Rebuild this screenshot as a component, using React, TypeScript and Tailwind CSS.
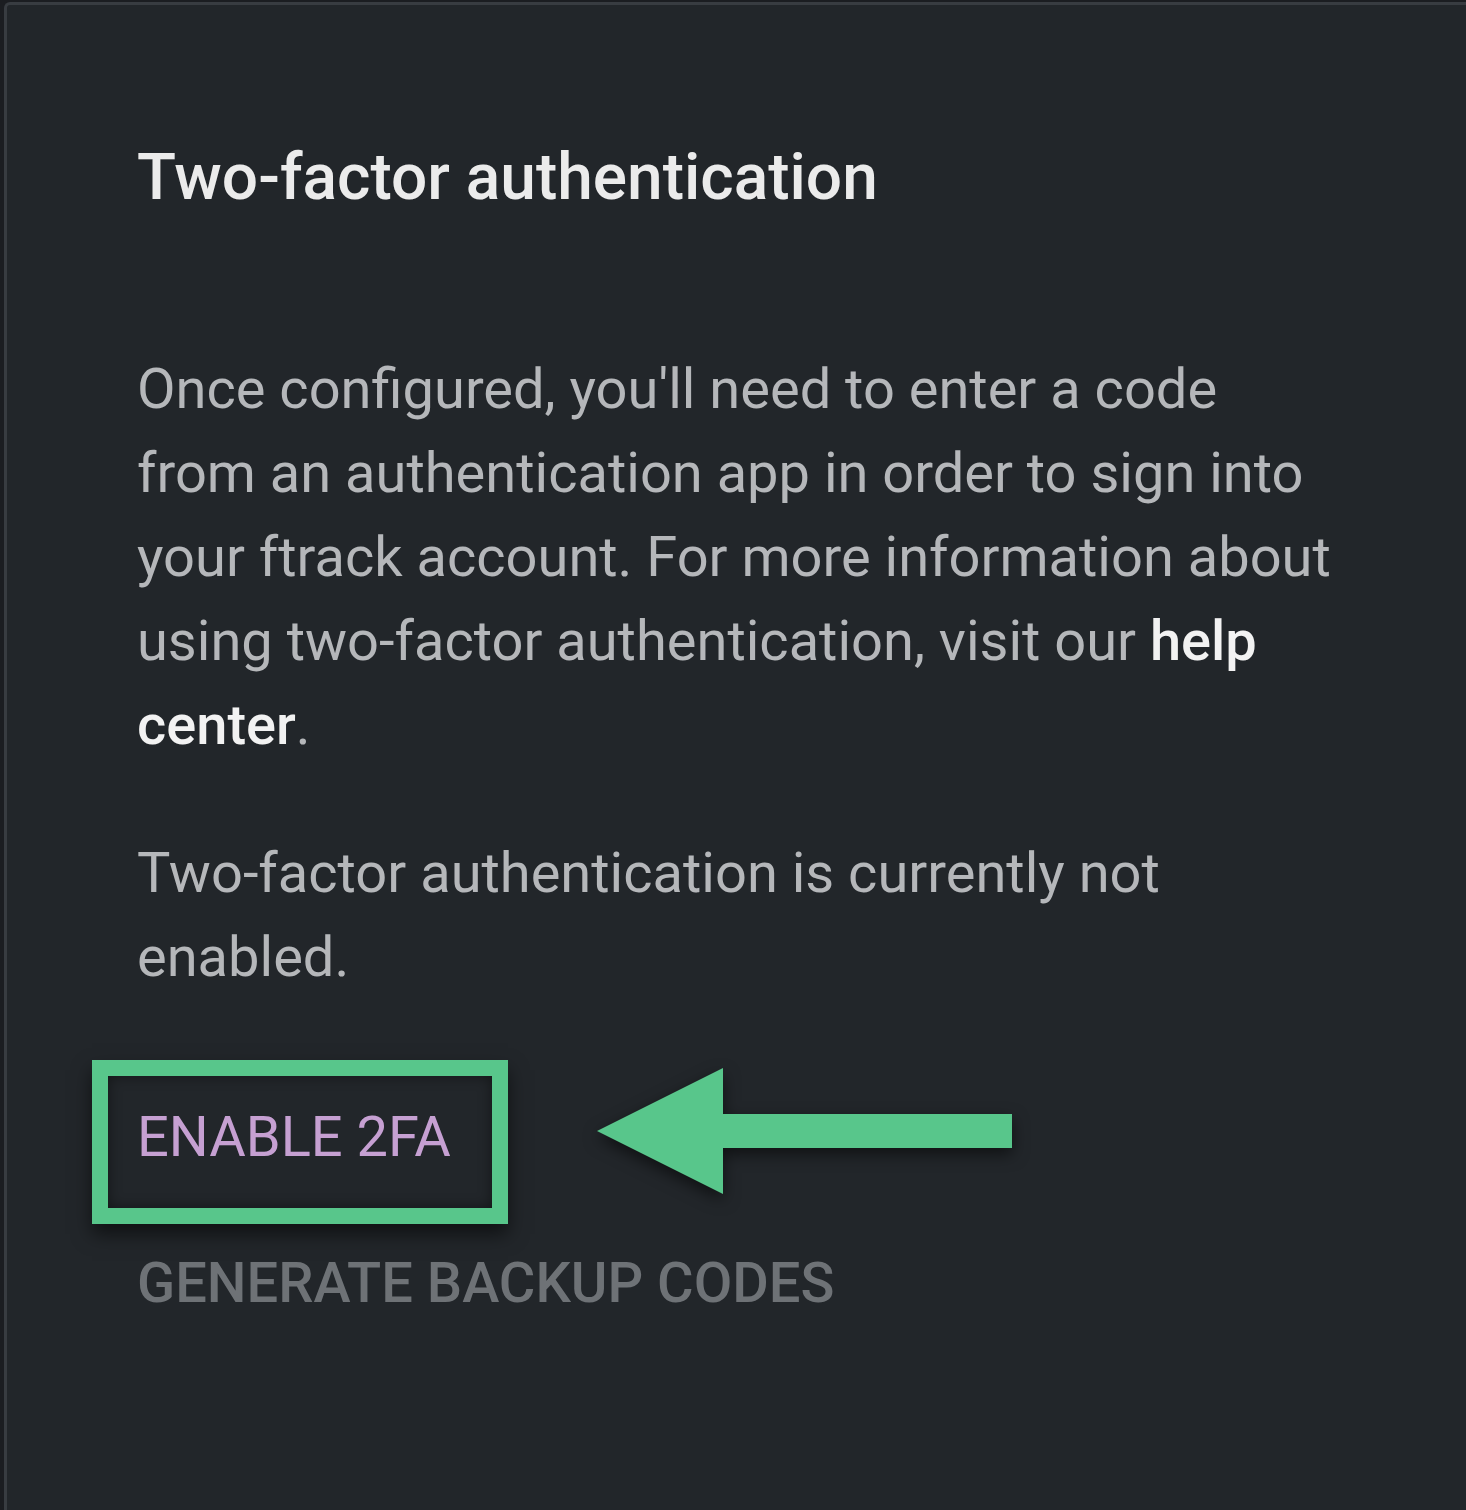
const FONT = { fontFamily: 'Roboto, "Noto Sans", sans-serif' }

const Arrow: React.FC = () => (
  <svg
    width="440"
    height="150"
    viewBox="0 0 440 150"
    className="absolute left-[460px] top-[-27px] drop-shadow-[0_6px_8px_rgba(0,0,0,0.55)]"
  >
    <path d="M 0 63 L 126 0 L 126 46 L 415 46 L 415 80 L 126 80 L 126 126 Z" fill="#58c68b" />
  </svg>
)

export default function App() {
  return (
    <div className="min-h-[1510px] bg-[#1b1d21] pt-[2px] pl-[4px]" style={FONT}>
      <div className="min-h-[1508px] bg-[#22262a] border-t-[3px] border-l-[3px] border-[#383c41] rounded-tl-[6px] pl-[130px] pt-[128px]">
        <h1 className="text-[64px] leading-[90px] font-medium text-[#ebebeb]">
          Two-factor authentication
        </h1>

        <div className="w-[1200px] mt-[124px] text-[56px] leading-[84px] text-[#b5b7ba]">
          <p>
            Once configured, you'll need to enter a code from an authentication app in order to sign into
            your ftrack account. For more information about using two-factor authentication, visit our{' '}
            <a className="font-medium text-[#f2f2f2]">help center</a>.
          </p>
          <p className="mt-[64px]">Two-factor authentication is currently not enabled.</p>
        </div>

        <div className="relative mt-[96px] w-fit">
          <div className="absolute left-[-45px] top-[-35px] w-[416px] h-[164px] border-[16px] border-[#58c68b] shadow-[0_10px_18px_rgba(0,0,0,0.55),inset_0_0_14px_rgba(0,0,0,0.45)]" />
          <button className="relative text-[56px] leading-[84px] text-[#c6a0d2] uppercase">Enable 2FA</button>
          <Arrow />
        </div>

        <button className="block mt-[62px] text-[56px] leading-[84px] font-medium text-[#6e7276] uppercase">
          Generate backup codes
        </button>
      </div>
    </div>
  )
}
